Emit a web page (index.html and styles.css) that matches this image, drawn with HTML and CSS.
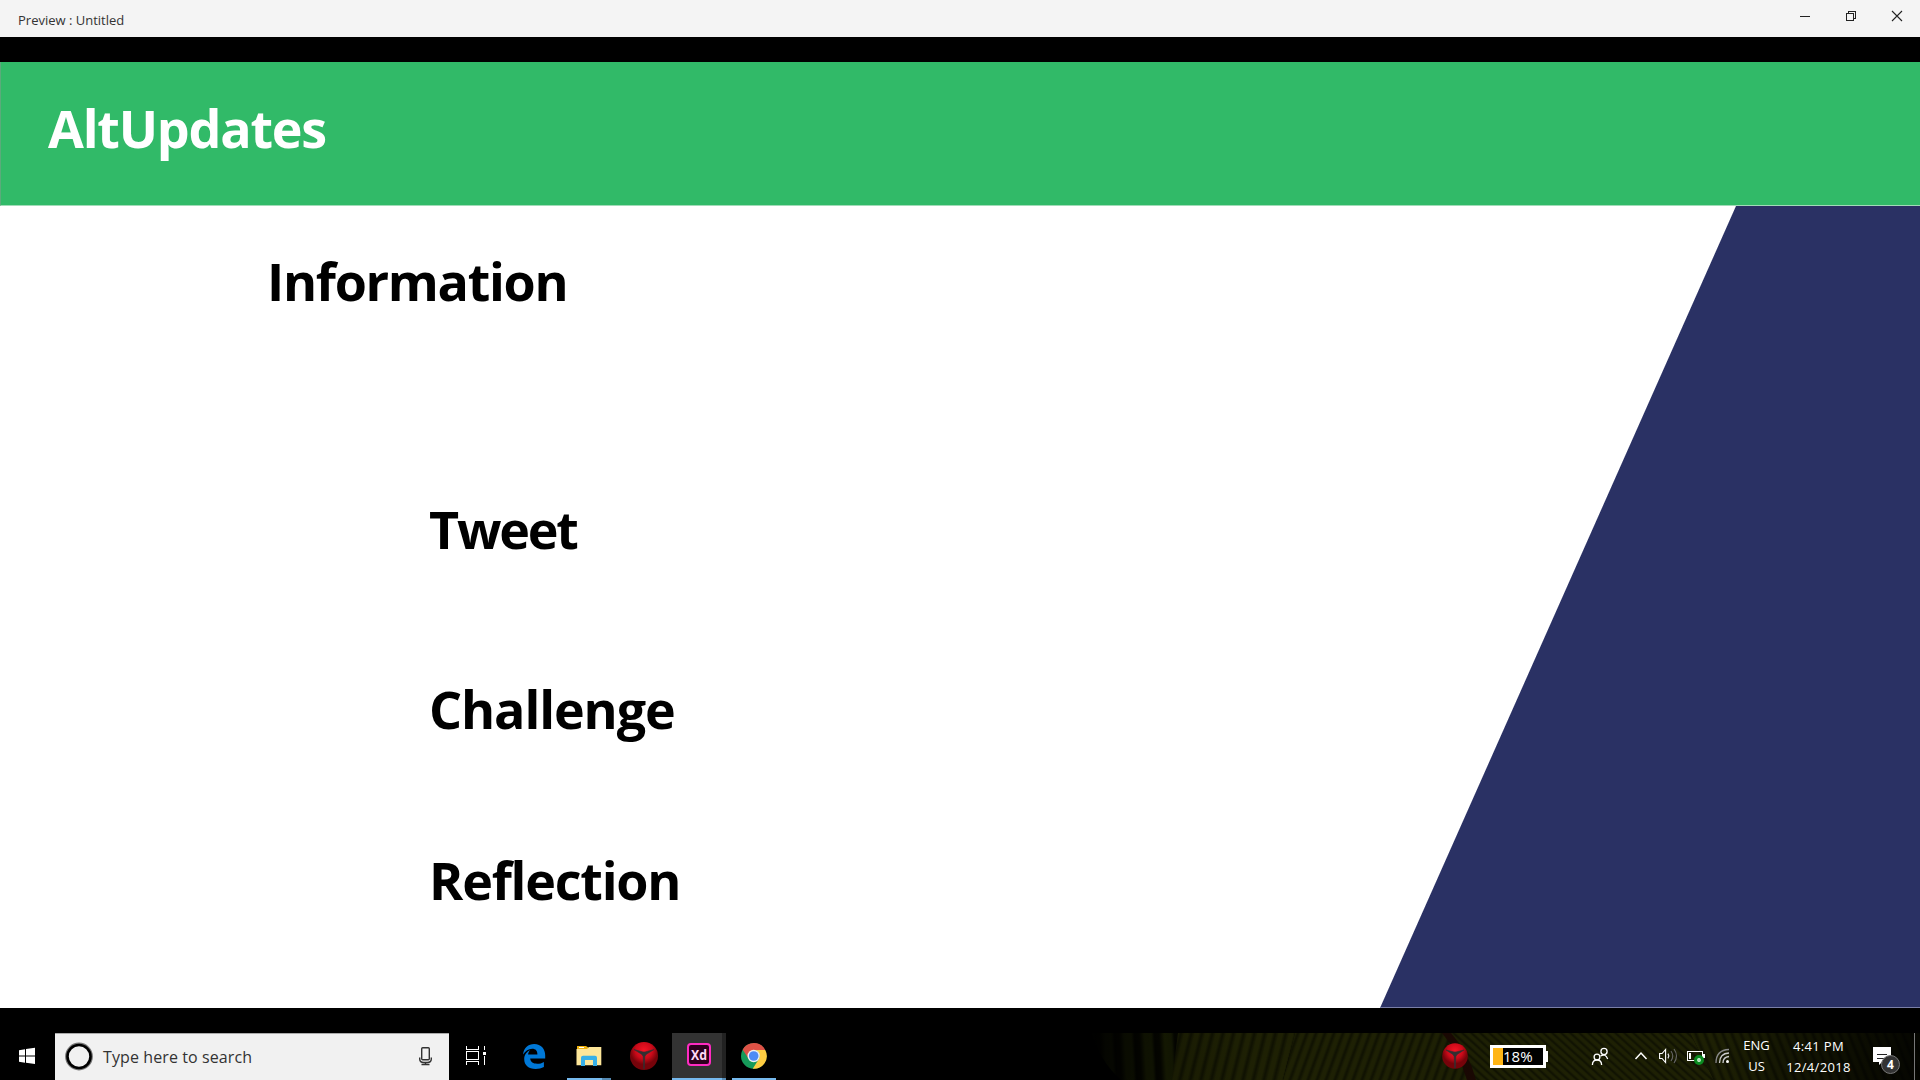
FILE: index.html
```html
<!DOCTYPE html>
<html lang="en">
<head>
<meta charset="utf-8">
<title>Preview : Untitled</title>
<link rel="stylesheet" href="styles.css">
</head>
<body>
<header class="titlebar">
  <span class="window-title">Preview : Untitled</span>
  <svg class="window-controls" viewBox="1782 0 138 37" width="138" height="37" fill="none" stroke="#222" shape-rendering="crispEdges">
    <path d="M1800 16.5h10M1846.500 13.500h7v7h-7zM1848.500 13v-1.500h7v7H1854"/>
    <path d="M1892 11l10 10M1902 11l-10 10" shape-rendering="auto" stroke-width="1.1"/>
  </svg>
</header>
<main class="stage">
  <section class="artboard">
    <div class="banner"><h1 class="heading brand">AltUpdates</h1></div>
    <div class="content">
      <h2 class="heading information">Information</h2>
      <h2 class="heading tweet">Tweet</h2>
      <h2 class="heading challenge">Challenge</h2>
      <h2 class="heading reflection">Reflection</h2>
    </div>
  </section>
</main>
<footer class="taskbar">
  <svg class="wallpaper" viewBox="1080 1033 840 47" width="840" height="47">
    <defs>
      <linearGradient id="fade"><stop offset="0" stop-color="#000"/><stop offset=".02" stop-color="#000" stop-opacity=".9"/><stop offset=".1" stop-color="#000" stop-opacity=".25"/><stop offset=".2" stop-color="#000" stop-opacity=".1"/><stop offset=".75" stop-color="#000" stop-opacity=".1"/><stop offset=".88" stop-color="#000" stop-opacity=".5"/><stop offset="1" stop-color="#000" stop-opacity=".85"/></linearGradient>
      <linearGradient id="rib"><stop offset="0" stop-color="#101202"/><stop offset=".35" stop-color="#212404"/><stop offset=".7" stop-color="#212404"/><stop offset="1" stop-color="#101202"/></linearGradient>
      <linearGradient id="band"><stop offset="0" stop-color="#040500"/><stop offset=".25" stop-color="#060700"/><stop offset=".5" stop-color="#1a1f03"/><stop offset=".85" stop-color="#171c03"/><stop offset="1" stop-color="#040500"/></linearGradient>
      <pattern id="wide" width="20" height="47" patternUnits="userSpaceOnUse" patternTransform="skewX(3)"><rect width="20" height="47" fill="url(#band)"/></pattern>
      <pattern id="lean" width="10.500" height="47" patternUnits="userSpaceOnUse" patternTransform="skewX(-14)"><rect width="10.500" height="47" fill="url(#rib)"/></pattern>
      <pattern id="lean2" width="9" height="47" patternUnits="userSpaceOnUse" patternTransform="skewX(-20)"><rect width="9" height="47" fill="url(#rib)"/></pattern>
      <pattern id="fall" width="9" height="47" patternUnits="userSpaceOnUse" patternTransform="skewX(48)"><rect width="9" height="47" fill="url(#rib)"/></pattern>
      <pattern id="steep" width="9" height="47" patternUnits="userSpaceOnUse" patternTransform="skewX(22)"><rect width="9" height="47" fill="url(#rib)"/></pattern>
    </defs>
    <path d="M1092 1033h92l-8 47h-55q-22-20-29-47z" fill="url(#wide)"/>
    <path d="M1178 1033h117l-12 47h-111z" fill="url(#lean)"/>
    <path d="M1295 1033h148q18 20 30 47h-190z" fill="url(#lean2)"/>
    <path d="M1443 1033h247l24 47h-241q-12-27-30-47z" fill="url(#fall)"/>
    <path d="M1690 1033h230v47h-206z" fill="url(#steep)"/>
    <path d="M1442 1033h9q18 20 25 47h-9q-8-27-25-47z" fill="#1c0903"/>
    <rect x="1080" y="1033" width="840" height="47" fill="url(#fade)"/>
  </svg>
  <svg class="cell" viewBox="0 1033 55 47" width="55" height="47" fill="#fff"><path d="M19 1050.300l6-1v6.200h-6zM26 1049.100l9-1.300v7.700h-9zM19 1056.500h6v6.200l-6-1zM26 1056.500h9v7.600l-9-1.300z"/></svg>
  <div class="search">
    <svg class="cell" viewBox="55 1033 48 46" width="48" height="46" fill="none"><circle cx="79" cy="1055.500" r="12.900" stroke="#777" stroke-width="2"/><circle cx="79" cy="1055.500" r="11.500" stroke="#000" stroke-width="2.600"/></svg>
    <span class="search-text">Type here to search</span>
    <svg class="cell mic" viewBox="409 1034 40 46" width="40" height="46" fill="none" stroke="#333" stroke-width="1.400"><rect x="421.700" y="1047.700" width="7.600" height="12" rx="1"/><path d="M419.700 1057.500v1.500q0 3.500 4 3.500h3.600q4 0 4-3.500v-1.500M425.500 1062.500v2M421.500 1064.500h8"/></svg>
  </div>
  <svg class="cell" viewBox="449 1033 55 47" width="55" height="47" fill="none" stroke="#fff" shape-rendering="crispEdges"><path d="M466.500 1046v3.500h12v-3.500M466.500 1065v-3.500h12v3.500M466.500 1051.500h12v8h-12zM484.500 1046v4M484.500 1056v9"/><path d="M483 1052h3v3h-3z" fill="#fff" stroke="none"/></svg>
  <svg class="cell" viewBox="504 1033 58 47" width="58" height="47"><path fill="#0078d7" d="M523 1054.500c.8-6.500 5.300-10.500 11.200-10.500 7 0 11 5 11 11.300v3.300h-15c.2 3.600 3.300 5.200 6.900 5.200 2.600 0 4.900-.7 6.800-1.900v5.100c-2.400 1.300-5.200 1.900-8.200 1.900-7.300 0-11.500-3.900-11.500-10 0-4.200 2.600-7.300 6-9-1.300 1.400-1.900 2.800-2.100 4.500h9.300c0-3.500-1.700-5.600-5.200-5.600-3.700 0-6.900 2.300-9.200 5.700z"/></svg>
  <svg class="cell" viewBox="562 1033 54 47" width="54" height="47"><path fill="#eeb20e" d="M577 1046h9l3 2v3h-12z"/><path fill="#fff" d="M579 1047h5v1h-5z"/><path fill="#fde699" d="M576.500 1049h10.500l2-2h12.300v18.300h-24.800z"/><path fill="#37b0e8" d="M581 1065.700v-8q0-2 2-2h12q2 0 2 2v8.300h-4v-6h-8v6h-4z"/><path fill="#76b9ed" d="M567 1078h35v2h-35z"/><path fill="#558ab3" d="M602 1078h9v2h-9z"/></svg>
  <svg class="cell" viewBox="616 1033 56 47" width="56" height="47">
    <defs><radialGradient id="ball" cx=".5" cy=".3"><stop offset="0" stop-color="#f41525"/><stop offset=".6" stop-color="#ca0a19"/><stop offset="1" stop-color="#76030a"/></radialGradient></defs>
    <circle cx="644" cy="1056" r="14" fill="url(#ball)"/><path fill="#322f31" d="M634 1049.500l9 2.500h2l9-2.500-8 5-1.200 2-.5 12.500h-.6l-.5-12.500-1.200-2z" stroke="#322f31" stroke-width=".6"/></svg>
  <svg class="cell" viewBox="672 1033 54 47" width="54" height="47"><path fill="#333" d="M672 1033h50v47h-50z"/><path fill="#222" d="M722 1033h4v47h-4z"/><rect x="688" y="1044" width="22" height="21" rx="3" fill="#2e001e" stroke="#ff2bc2" stroke-width="2"/><text class="xd" x="699" y="1060" textLength="16" lengthAdjust="spacingAndGlyphs">Xd</text><path fill="#76b9ed" d="M672 1078h50v2h-50z"/><path fill="#558ab3" d="M722 1078h4v2h-4z"/></svg>
  <svg class="cell" viewBox="726 1033 56 47" width="56" height="47"><circle cx="753.700" cy="1056" r="12.700" fill="#169a5a"/><path fill="#de5246" d="M742.700 1049.700a12.700 12.700 0 0 1 22.500.3H754l-5.200 9z"/><path fill="#ffcd42" d="M765.200 1050a12.700 12.700 0 0 1-12.500 18.700l6.200-9.700a6 6 0 0 0-5.200-9z"/><circle cx="753.700" cy="1056" r="6.200" fill="#f1f1f1"/><circle cx="753.700" cy="1056" r="4.800" fill="#4c8bf5"/><path fill="#76b9ed" d="M732 1078h44v2h-44z"/></svg>
  <div class="tray">
    <svg class="cell" viewBox="1427 1033 63 47" width="63" height="47"><circle cx="1455" cy="1056" r="12.800" fill="url(#ball)"/><path fill="#322f31" stroke="#322f31" stroke-width=".6" d="M1446 1050l8 2h2l8-2-7 4.500-1.200 2-.5 11.500h-.6l-.5-11.500-1.200-2z"/></svg>
    <div class="charge"><span class="charge-fill"></span><span class="charge-text">18%</span></div>
    <svg class="cell" viewBox="1546 1033 190 47" width="190" height="47" fill="none" stroke="#fff" stroke-width="1.300">
      <path fill="#fff" stroke="none" d="M1546 1051h2v11h-2z"/>
      <circle cx="1604" cy="1051.500" r="3.100"/><circle cx="1597" cy="1057" r="2.900"/><path d="M1592.400 1065q0-5 4.600-5t4.600 5M1600.500 1056q5-3 7.200 3"/>
      <path stroke-width="1.500" d="M1635.500 1059l5.500-6 5.500 6"/>
      <path stroke-width="1.100" d="M1659.600 1053.500h2.500l3.500-4v13l-3.500-4h-2.500z"/><path d="M1668 1053.700q1.500 2.300 0 4.600" stroke="#ddd"/><path stroke="#666" stroke-width="1.100" d="M1671 1051q3.500 5 0 10M1674 1049q5 7 0 14"/>
      <path shape-rendering="crispEdges" stroke-width="1" d="M1687.500 1051.500h15v9h-15zM1703 1054.500h1v3h-1z"/><path fill="#fff" stroke="none" d="M1689 1053h2v6h-2z"/><circle cx="1699" cy="1060" r="5" fill="#0b8b21" stroke="none"/><circle cx="1699" cy="1060" r="1.200" stroke="#d7f3da" stroke-width="1.400"/>
      <path stroke="#888" d="M1716 1063q0-13 13-13.500"/><path stroke="#ccc" d="M1719.500 1063q0-9.500 9.500-10M1723 1063q0-6 6-6.500"/><circle cx="1727.500" cy="1061.500" r="1.500" fill="#fff" stroke="none"/>
    </svg>
    <div class="language"><span>ENG</span><span>US</span></div>
    <div class="clock"><span class="time">4:41 PM</span><span class="date">12/4/2018</span></div>
    <svg class="cell" viewBox="1860 1033 60 47" width="60" height="47"><path fill="#fff" d="M1873 1047h18v15h-9l-3 3v-3h-6z"/><path stroke="#222" d="M1877 1054.500h10M1877 1058.500h7"/><circle cx="1890.500" cy="1064.500" r="9" fill="#333" stroke="#777"/><text class="count" x="1890.500" y="1069">4</text><path stroke="#777" d="M1914.500 1033v47"/></svg>
  </div>
</footer>
</body>
</html>
```
FILE: styles.css
```css
* { box-sizing: border-box; }
body {
  margin: 0;
  width: 1920px;
  height: 1080px;
  overflow: hidden;
  display: flex;
  flex-direction: column;
  background: #000;
  font-family: "Open Sans", "Noto Sans", sans-serif;
}
.titlebar {
  height: 37px;
  display: flex;
  justify-content: space-between;
  background: #f4f4f4;
  color: #333;
}
.window-title {
  padding: 9px 0 0 18px;
  font-size: 13px;
  line-height: 22px;
  letter-spacing: 0;
}
.stage { height: 996px; padding: 25px 0; }
.artboard {
  height: 946px;
  display: flex;
  flex-direction: column;
  background: #fff;
}
.banner {
  height: 144px;
  padding: 31px 0 0 47px;
  background: #31ba68;
  border-left: 1px solid #5aab7b;
  border-bottom: 1px solid #a1dcb8;
}
.content {
  height: 802px;
  display: flex;
  flex-direction: column;
  background:
    linear-gradient(#7a7fa8, #7a7fa8) 1380px 801px / 540px 1px no-repeat,
    linear-gradient(to bottom right, transparent calc(50% - .5px), #2a3164 calc(50% + .5px)) 1380px 0 / 356px 802px no-repeat,
    linear-gradient(#2a3164, #2a3164) 1736px 0 / 184px 802px no-repeat,
    #fff;
}
.heading {
  margin: 0;
  font-size: 52px;
  font-weight: 700;
  line-height: 70px;
  letter-spacing: -1.3px;
  white-space: nowrap;
}
.brand { color: #fff; letter-spacing: -1.2px; }
.information { padding: 40px 0 0 267px; }
.tweet { padding: 178px 0 0 429px; letter-spacing: -2.2px; }
.challenge { padding: 110px 0 0 429px; letter-spacing: -1.1px; }
.reflection { padding: 101px 0 0 429px; letter-spacing: -1.2px; }
.taskbar {
  height: 47px;
  display: flex;
  position: relative;
  background: #000;
  color: #fff;
}
.wallpaper { position: absolute; right: 0; top: 0; }
.cell { display: block; flex: none; position: relative; }
.search {
  width: 394px;
  display: flex;
  background: #f1f1f1;
  border-top: 1px solid #aaa;
  color: #333;
}
.search-text { font-size: 16px; line-height: 46px; letter-spacing: .1px; }
.mic { margin-left: auto; }
.xd {
  font-size: 15px;
  font-weight: 700;
  fill: #ffd9f5;
  text-anchor: middle;
}
.tray { display: flex; margin-left: auto; position: relative; }
.charge {
  width: 56px;
  height: 23px;
  margin-top: 12px;
  border: 3px solid #fff;
  background: #000;
  display: flex;
}
.charge-fill { width: 10px; background: #ffb515; }
.charge-text { font-size: 15px; line-height: 17px; }
.language, .clock {
  display: flex;
  flex-direction: column;
  align-items: center;
  padding-top: 2px;
  font-size: 13px;
  line-height: 21px;
}
.language { width: 41px; }
.clock { width: 83px; padding-top: 3px; letter-spacing: .35px; }
.count {
  font-size: 12px;
  font-weight: 700;
  fill: #fff;
  text-anchor: middle;
}
```
